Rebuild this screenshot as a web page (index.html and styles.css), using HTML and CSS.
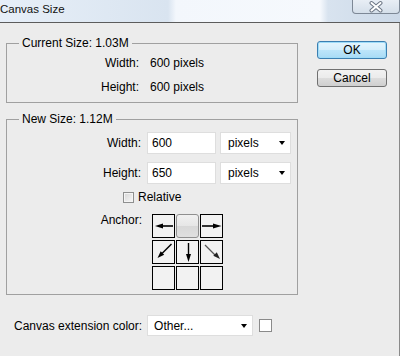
FILE: index.html
```html
<!DOCTYPE html>
<html lang="en">
<head>
  <meta charset="UTF-8">
  <title>Canvas Size</title>
  <link rel="stylesheet" href="styles.css">
</head>
<body>
  <div class="titlebar">
    <span class="title">Canvas Size</span>
    <span class="close">
      <svg width="46" height="13" viewBox="0 0 46 13">
        <path d="M18.5 3 L27.5 10.5 M27.5 3 L18.5 10.5" stroke="#6b7584" stroke-width="4" stroke-linecap="round"/>
        <path d="M18.5 3 L27.5 10.5 M27.5 3 L18.5 10.5" stroke="#fff" stroke-width="2" stroke-linecap="round"/>
      </svg>
    </span>
  </div>

  <div class="dialog">
    <div class="main">
      <fieldset class="group current">
        <legend>Current Size: 1.03M</legend>
        <div class="info-grid">
          <span class="label">Width:</span><span>600 pixels</span>
          <span class="label">Height:</span><span>600 pixels</span>
        </div>
      </fieldset>

      <fieldset class="group new">
        <legend>New Size: 1.12M</legend>
        <div class="field-row first">
          <label class="label" for="w">Width:</label>
          <input type="text" id="w" class="text-input" value="600">
          <div class="dropdown">pixels<span class="caret"></span></div>
        </div>
        <div class="field-row second">
          <label class="label" for="h">Height:</label>
          <input type="text" id="h" class="text-input" value="650">
          <div class="dropdown">pixels<span class="caret"></span></div>
        </div>
        <div class="check-row"><span class="checkbox"></span>Relative</div>
        <div class="anchor-row">
          <span class="label">Anchor:</span>
          <div class="anchor-grid">
            <div class="cell">
              <svg width="21" height="22" viewBox="0 0 21 22">
                <line x1="9" y1="11" x2="20" y2="11" stroke="#000" stroke-width="1.6"/>
                <polygon points="2,11 10,8.5 10,13.5" fill="#000"/>
              </svg>
            </div>
            <div class="cell selected"></div>
            <div class="cell">
              <svg width="21" height="22" viewBox="0 0 21 22">
                <line x1="1" y1="11" x2="13" y2="11" stroke="#000" stroke-width="1.6"/>
                <polygon points="20.5,11 12,8.5 12,13.5" fill="#000"/>
              </svg>
            </div>
            <div class="cell">
              <svg width="21" height="22" viewBox="0 0 21 22">
                <line x1="18.5" y1="3" x2="9" y2="12.5" stroke="#000" stroke-width="1.4"/>
                <polygon points="4.5,17 11.2,13.8 7.7,10.3" fill="#000"/>
              </svg>
            </div>
            <div class="cell">
              <svg width="21" height="22" viewBox="0 0 21 22">
                <line x1="11.5" y1="2" x2="11.5" y2="15" stroke="#000" stroke-width="1.4"/>
                <polygon points="11.5,21 9,13 14,13" fill="#000"/>
              </svg>
            </div>
            <div class="cell">
              <svg width="21" height="22" viewBox="0 0 21 22">
                <line x1="4" y1="4" x2="14" y2="14" stroke="#555" stroke-width="1.2"/>
                <polygon points="19,18 15.8,11.3 12.3,14.8" fill="#222"/>
              </svg>
            </div>
            <div class="cell"></div>
            <div class="cell"></div>
            <div class="cell"></div>
          </div>
        </div>
      </fieldset>

      <div class="ext-row">
        <span>Canvas extension color:</span>
        <div class="dropdown wide">Other...<span class="caret"></span></div>
        <span class="swatch"></span>
      </div>
    </div>

    <div class="buttons">
      <button class="btn btn-default">OK</button>
      <button class="btn">Cancel</button>
    </div>
  </div>
</body>
</html>
```

FILE: styles.css
```css
body {
  margin: 0;
  width: 400px;
  height: 356px;
  overflow: hidden;
  background: #ececec;
  font-family: "Liberation Sans", Arial, sans-serif;
  font-size: 12px;
  color: #000;
}
.titlebar {
  display: flex;
  align-items: flex-start;
  height: 22px;
  border-bottom: 1px solid #5c5c5c;
  background: linear-gradient(to right, #e6eef8 0, #e2ebf5 15%, #d9e4f0 42%, #f3f7fc 44%, #f6f9fd 80%, #d8e3ef 82%, #ccd9e8 100%);
}
.title {
  line-height: 19px;
  font-size: 11.5px;
  color: #111;
}
.close {
  margin-left: auto;
  width: 46px;
  height: 13px;
  border: 1px solid #7d8896;
  border-top: none;
  border-radius: 0 0 4px 4px;
  background: linear-gradient(#e8eef5, #d5dfea);
}
.close svg {
  display: block;
}
.dialog {
  display: flex;
  height: 333px;
  border-right: 1px solid #8a8a8a;
}
.main {
  width: 292px;
  padding: 13px 0 0 6px;
}
.group {
  margin: 0;
  padding: 0;
  border: 1px solid #a0a0a0;
  min-width: 0;
}
.group legend {
  margin-left: 12px;
  padding: 0 3px;
  line-height: 14px;
}
.group.new {
  margin-top: 9px;
  padding-bottom: 4px;
}
.info-grid {
  display: grid;
  grid-template-columns: 132px auto;
  column-gap: 11px;
  row-gap: 10px;
  line-height: 14px;
  padding: 6px 0 8px;
}
.label {
  text-align: right;
}
.field-row {
  display: flex;
  align-items: center;
  height: 22px;
}
.field-row.first {
  margin-top: 6px;
}
.field-row.second {
  margin-top: 8px;
}
.field-row .label {
  width: 134px;
  margin-right: 6px;
}
.text-input {
  box-sizing: border-box;
  width: 69px;
  height: 22px;
  margin: 0;
  padding: 0 4px;
  border: 1px solid #dedede;
  background: #fff;
  font: inherit;
  color: #000;
  outline: none;
}
.dropdown {
  box-sizing: border-box;
  display: flex;
  align-items: center;
  width: 71px;
  height: 22px;
  margin-left: 4px;
  padding: 0 5px 0 7px;
  border: 1px solid #dedede;
  background: #fff;
}
.caret {
  margin-left: auto;
  width: 0;
  height: 0;
  border-left: 3.5px solid transparent;
  border-right: 3.5px solid transparent;
  border-top: 4px solid #000;
}
.check-row {
  display: flex;
  align-items: center;
  margin-top: 6px;
  padding-left: 116px;
  line-height: 14px;
}
.checkbox {
  box-sizing: border-box;
  width: 11px;
  height: 11px;
  margin-right: 4px;
  border: 1px solid #8e8f8f;
  background: linear-gradient(135deg, #d6d6d6, #f7f7f7);
  box-shadow: inset 0 0 0 1px #f4f4f4;
}
.anchor-row {
  display: flex;
  align-items: flex-start;
  margin-top: 10px;
}
.anchor-row .label {
  width: 135px;
  margin-right: 10px;
  line-height: 12px;
}
.anchor-grid {
  display: grid;
  grid-template-columns: repeat(3, 23px);
  grid-template-rows: repeat(3, 24px);
  column-gap: 1px;
  row-gap: 2px;
}
.cell {
  box-sizing: border-box;
  border: 1px solid #000;
  background: #f2f2f2;
}
.cell svg {
  display: block;
}
.cell.selected {
  border-color: #8f8f8f;
  border-radius: 3px;
  background: linear-gradient(#f1f1f1 0, #e6e6e6 50%, #d8d8d8 52%, #e0e0e0 100%);
}
.ext-row {
  display: flex;
  align-items: center;
  margin-top: 20px;
  padding-left: 8px;
}
.dropdown.wide {
  width: 106px;
  height: 21px;
  margin-left: 5px;
  padding-left: 6px;
}
.swatch {
  box-sizing: border-box;
  width: 13px;
  height: 13px;
  margin-left: 6px;
  border: 1px solid #8a8a8a;
  background: #fff;
}
.buttons {
  display: flex;
  flex-direction: column;
  gap: 10px;
  margin-left: 19px;
  padding-top: 18px;
}
.btn {
  box-sizing: border-box;
  width: 70px;
  height: 18px;
  padding: 0;
  border: 1px solid #707070;
  border-radius: 3px;
  background: linear-gradient(#f2f2f2 0, #ebebeb 50%, #dddddd 50%, #cfcfcf 100%);
  font: inherit;
  color: #000;
  line-height: 15px;
}
.btn-default {
  border-color: #3c7fb1;
  background: linear-gradient(#e5f5fd 0, #d4eefb 50%, #bde5fa 50%, #a9dbf5 100%);
  box-shadow: inset 0 0 0 1px #9fdcf8;
}
```
